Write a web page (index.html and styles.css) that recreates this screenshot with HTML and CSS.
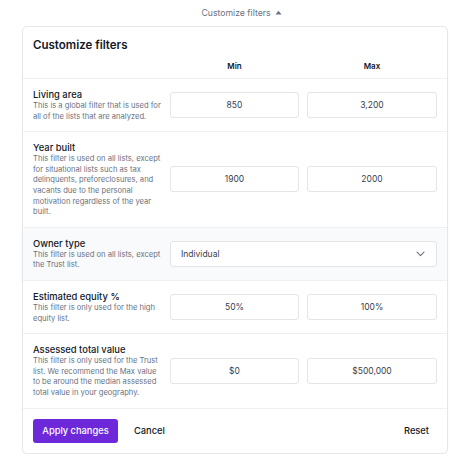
FILE: index.html
```html
<!DOCTYPE html>
<html lang="en">
<head>
<meta charset="utf-8">
<title>Customize filters</title>
<link rel="stylesheet" href="styles.css">
</head>
<body>
<div class="toggle">
  <span>Customize filters</span>
  <svg class="caret" width="7" height="5" viewBox="0 0 7 5"><path d="M0.5 4.5 L3.5 0.8 L6.5 4.5 Z" fill="#6b7280"/></svg>
</div>
<div class="card">
  <div class="card-head">
    <div class="card-title">Customize filters</div>
    <div class="grid col-heads">
      <div></div>
      <div class="col-head">Min</div>
      <div class="col-head">Max</div>
    </div>
  </div>

  <div class="grid row">
    <div class="label">
      <div class="title">Living area</div>
      <div class="desc">This is a global filter that is used for all of the lists that are analyzed.</div>
    </div>
    <div class="input">850</div>
    <div class="input">3,200</div>
  </div>

  <div class="grid row">
    <div class="label">
      <div class="title">Year built</div>
      <div class="desc">This filter is used on all lists, except for situational lists such as tax delinquents, preforeclosures, and vacants due to the personal motivation regardless of the year built.</div>
    </div>
    <div class="input">1900</div>
    <div class="input">2000</div>
  </div>

  <div class="grid row shaded">
    <div class="label">
      <div class="title">Owner type</div>
      <div class="desc">This filter is used on all lists, except the Trust list.</div>
    </div>
    <div class="select">
      <span>Individual</span>
      <svg width="9" height="6" viewBox="0 0 9 6"><path d="M1 1.2 L4.5 4.6 L8 1.2" fill="none" stroke="#6b7280" stroke-width="1.1" stroke-linecap="round" stroke-linejoin="round"/></svg>
    </div>
  </div>

  <div class="grid row">
    <div class="label">
      <div class="title">Estimated equity %</div>
      <div class="desc">This filter is only used for the high equity list.</div>
    </div>
    <div class="input">50%</div>
    <div class="input">100%</div>
  </div>

  <div class="grid row">
    <div class="label">
      <div class="title">Assessed total value</div>
      <div class="desc">This filter is only used for the Trust list. We recommend the Max value to be around the median assessed total value in your geography.</div>
    </div>
    <div class="input">$0</div>
    <div class="input">$500,000</div>
  </div>

  <div class="footer">
    <button class="btn-primary">Apply changes</button>
    <button class="btn-text">Cancel</button>
    <button class="btn-text reset">Reset</button>
  </div>
</div>
</body>
</html>
```

FILE: styles.css
```css
* { box-sizing: border-box; }
body {
  margin: 0;
  font-family: Inter, "Noto Sans", sans-serif;
  color: #111827;
  background: #ffffff;
}
.toggle {
  height: 26px;
  display: flex;
  align-items: center;
  justify-content: center;
  gap: 4px;
  font-size: 8.7px;
  color: #6b7280;
  padding-left: 10px;
}
.caret { margin-top: -1px; }
.card {
  margin: 0 25px 0 22px;
  border: 1px solid #e5e7eb;
  border-radius: 5px;
  box-shadow: 0 1px 2px rgba(0,0,0,0.06);
  overflow: hidden;
}
.card-head {
  padding: 10px 10px 7px;
}
.card-title {
  font-size: 11.5px;
  font-weight: 600;
  line-height: 16px;
  margin-bottom: 8px;
}
.grid {
  display: grid;
  grid-template-columns: 1fr 129px 130px;
  column-gap: 8px;
  align-items: center;
}
.col-head {
  font-size: 8px;
  font-weight: 600;
  line-height: 10px;
  text-align: center;
  color: #111827;
}
.row {
  padding: 9px 10px;
  border-top: 1px solid #eef0f3;
}
.row.shaded { background: #f9fafb; }
.title {
  font-size: 9.4px;
  font-weight: 500;
  line-height: 13px;
  color: #111827;
}
.desc {
  font-size: 7.6px;
  line-height: 10.6px;
  color: #6b7280;
}
.input {
  height: 26px;
  border: 1px solid #e2e5e9;
  border-radius: 3px;
  background: #fff;
  display: flex;
  align-items: center;
  justify-content: center;
  font-size: 8.5px;
  color: #374151;
}
.select {
  grid-column: 2 / 4;
  height: 26px;
  border: 1px solid #e2e5e9;
  border-radius: 3px;
  background: #fff;
  display: flex;
  align-items: center;
  justify-content: space-between;
  padding: 0 11px 0 10px;
  font-size: 8.5px;
  color: #374151;
}
.footer {
  border-top: 1px solid #eef0f3;
  padding: 10px 10px 10px;
  display: flex;
  align-items: center;
  gap: 8px;
}
button {
  font-family: inherit;
  border: none;
  background: none;
  cursor: pointer;
}
.btn-primary {
  height: 24px;
  width: 85px;
  border-radius: 3px;
  background: #6d28d9;
  color: #fff;
  font-size: 9.3px;
  font-weight: 500;
}
.btn-text {
  font-size: 9.3px;
  font-weight: 500;
  color: #111827;
  padding: 0 8px;
}
.reset { margin-left: auto; }
```
